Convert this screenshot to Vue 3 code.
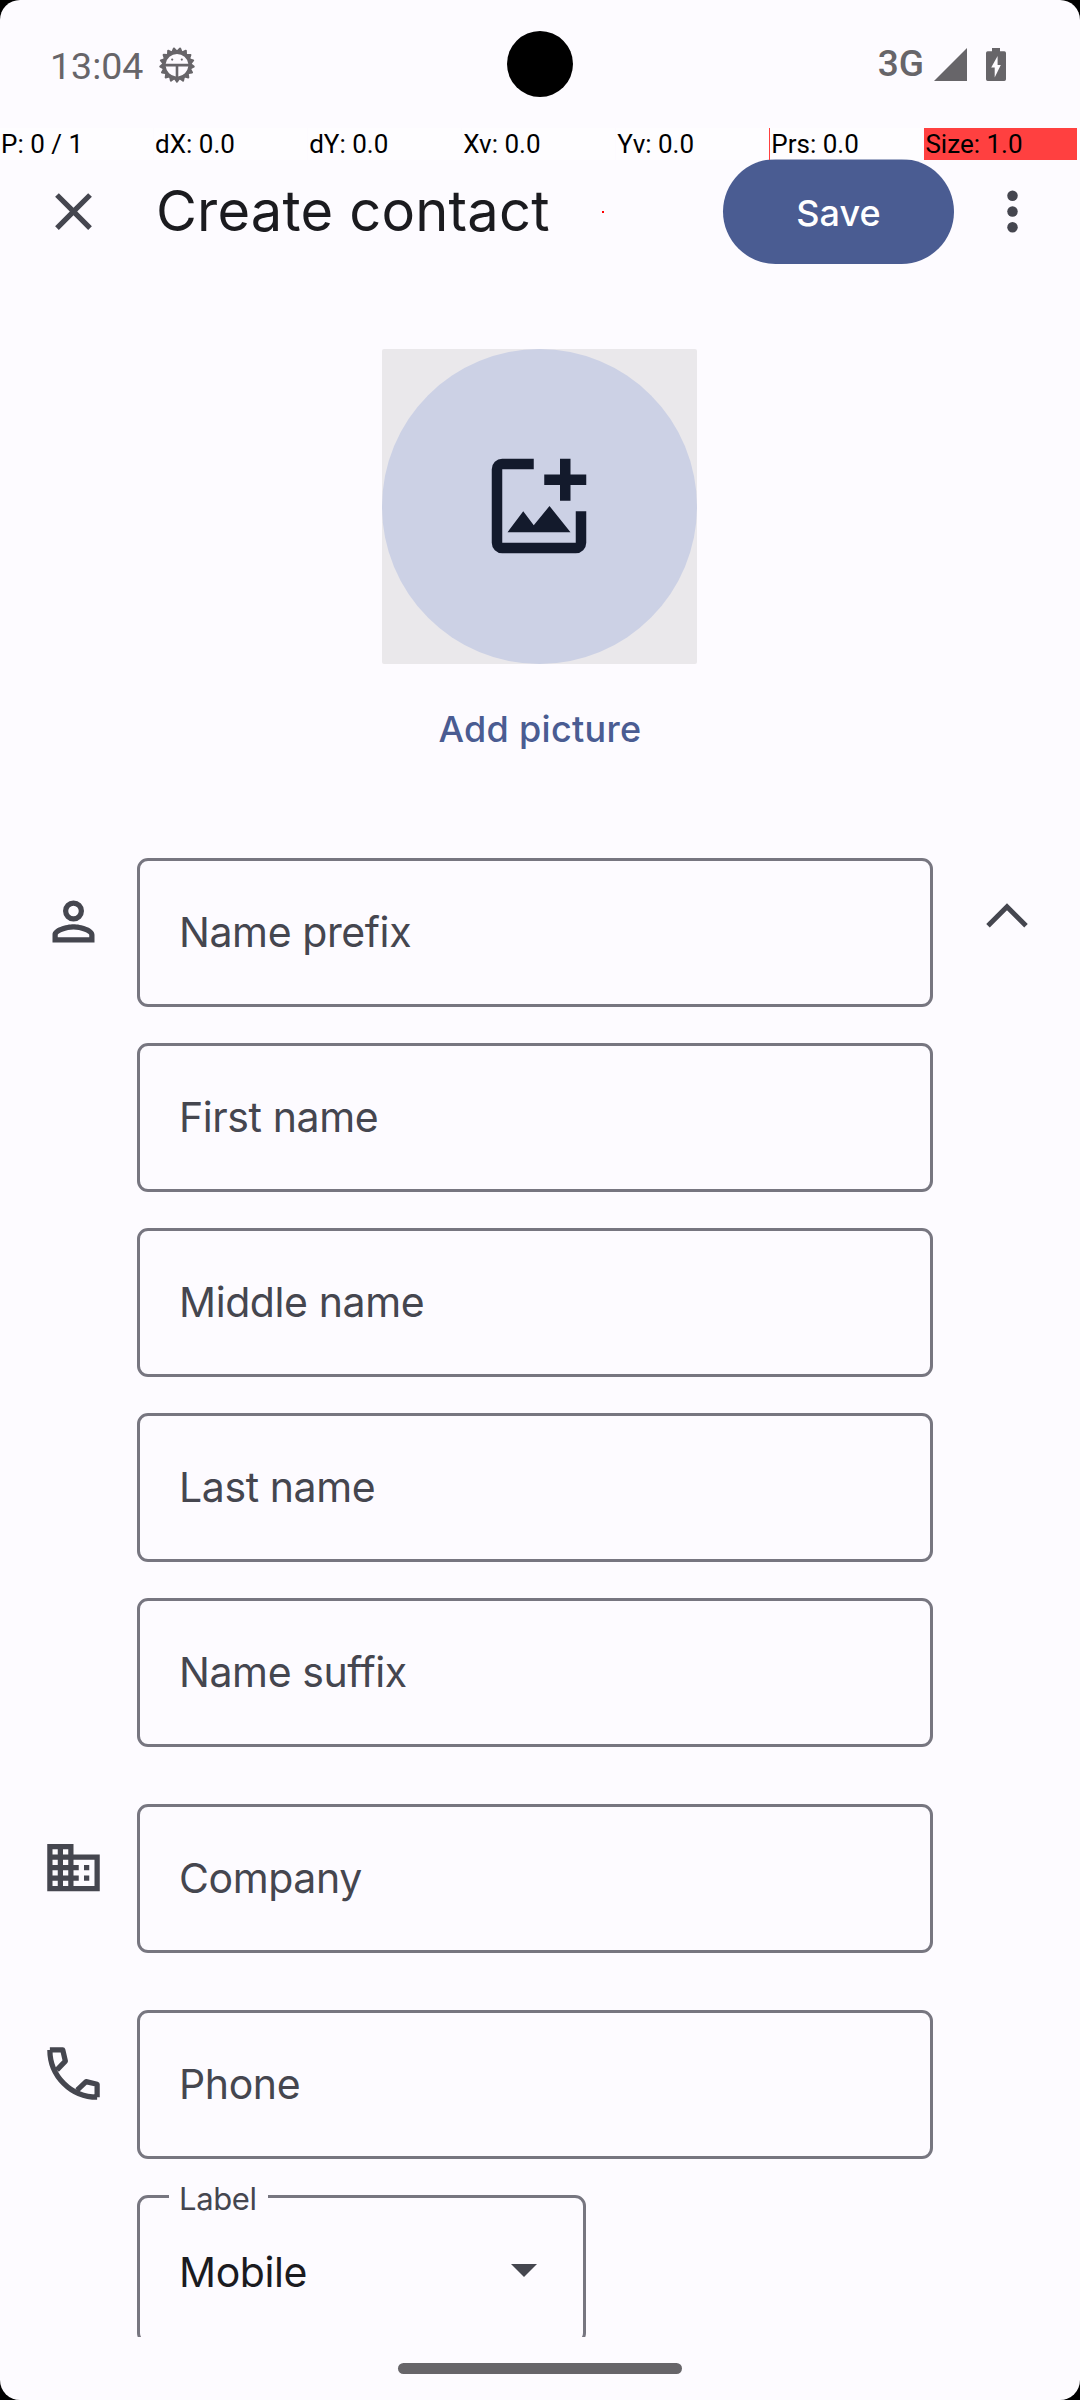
<script setup>
const stats = [
  { text: 'P: 0 / 1' },
  { text: 'dX: 0.0' },
  { text: 'dY: 0.0' },
  { text: 'Xv: 0.0' },
  { text: 'Yv: 0.0' },
  { text: 'Prs: 0.0', kind: 'marked' },
  { text: 'Size: 1.0', kind: 'alert' },
]

const sections = [
  { id: 'name', fields: ['Name prefix', 'First name', 'Middle name', 'Last name', 'Name suffix'] },
  { id: 'company', fields: ['Company'] },
  { id: 'phone', fields: ['Phone'] },
]

const teeth = Array.from({ length: 17 }, (_, i) => (i * 360) / 17 + 10.6)
</script>

<template>
  <div class="screen">
    <header class="status">
      <span class="clock">13:04</span>
      <svg class="bug" viewBox="-19 -19 38 38">
        <path v-for="a in teeth" :key="a" class="tooth" d="M-1.900 -14L0 -16.800L1.900 -14z" :transform="`rotate(${a})`" />
        <path fill-rule="evenodd" d="M-14.8 0a14.8 14.8 0 1 0 29.6 0a14.8 14.8 0 1 0-29.6 0zM-11.3-1.2a11.4 11.4 0 0 1 22.6 0zM-11.3 1.6H-1.3V11.4A11.5 11.5 0 0 1-11.3 1.6zM1.3 1.6H11.3A11.5 11.5 0 0 1 1.3 11.4z" />
        <circle cx="-4.8" cy="-5.4" r="1.1" /><circle cx="4.8" cy="-5.4" r="1.1" />
      </svg>
      <span class="network">3G</span>
      <svg class="signal" viewBox="0 0 33 33"><path d="M33 0V33H0z" /></svg>
      <svg class="battery" viewBox="0 0 20 33">
        <path d="M6 0h8v3.3h4.3q1.7 0 1.7 1.7v26.3q0 1.7-1.7 1.7H1.7Q0 33 0 31.300V5Q0 3.300 1.700 3.300H6z" />
        <path class="bolt" d="M11.6 8L5.200 19.500H8.700V29.500L14.800 17H11.600z" />
      </svg>
      <i class="camera"></i>
    </header>

    <div class="appbar">
      <svg class="icon24" viewBox="0 0 24 24"><path d="M19 6.410L17.590 5 12 10.590 6.410 5 5 6.410 10.590 12 5 17.590 6.410 19 12 13.410 17.590 19 19 17.590 13.410 12z" /></svg>
      <h1>Create contact</h1>
      <button class="save"><span>Save</span></button>
      <svg class="icon24 more" viewBox="0 0 24 24"><circle cx="12" cy="6" r="2" /><circle cx="12" cy="12" r="2" /><circle cx="12" cy="18" r="2" /></svg>
    </div>

    <div class="pointer-bar">
      <span v-for="s in stats" :key="s.text" :class="s.kind">{{ s.text }}</span>
    </div>
    <i class="touch"></i>

    <main>
      <div class="photo">
        <div class="disc">
          <svg viewBox="0 0 24 24">
            <path d="M5 3H11V5H5V19H19V13H21V19a2 2 0 0 1-2 2H5a2 2 0 0 1-2-2V5a2 2 0 0 1 2-2zM16 3h2v3h3v2h-3v3h-2V8h-3V6h3zM6 17l3-4 2 2.670L14 12l4 5z" />
          </svg>
        </div>
      </div>
      <div class="add">Add picture</div>

      <section v-for="s in sections" :key="s.id">
        <svg v-if="s.id === 'name'" class="icon24" viewBox="0 0 24 24">
          <path fill-rule="evenodd" d="M12 4a4 4 0 1 0 0 8 4 4 0 0 0 0-8zm0 2a2 2 0 1 1 0 4 2 2 0 0 1 0-4zM12 13c-2.670 0-8 1.340-8 4v3h16v-3c0-2.660-5.330-4-8-4zm6 5H6v-.990c.200-.720 3.300-2.010 6-2.010s5.800 1.290 6 2z" />
        </svg>
        <svg v-else-if="s.id === 'company'" class="icon24" viewBox="0 0 24 24">
          <path d="M12 7V3H2v18h20V7H12zM6 19H4v-2h2v2zm0-4H4v-2h2v2zm0-4H4V9h2v2zm0-4H4V5h2v2zm4 12H8v-2h2v2zm0-4H8v-2h2v2zm0-4H8V9h2v2zm0-4H8V5h2v2zm10 12h-8v-2h2v-2h-2v-2h2v-2h-2V9h8v10zm-2-8h-2v2h2v-2zm0 4h-2v2h2v-2z" />
        </svg>
        <svg v-else class="icon24 line" viewBox="0 0 24 24">
          <path d="M3 3H7.900L8.900 7.300L5.700 10.600M13.400 18.300L16.800 15.100L21 16.100V21M3 3A18 18 0 0 0 21 21" />
        </svg>
        <div class="fields">
          <div v-for="f in s.fields" :key="f" class="field">{{ f }}</div>
          <div v-if="s.id === 'phone'" class="field select">
            <span class="legend">Label</span>
            <span>Mobile</span>
            <svg viewBox="0 0 26 13"><path d="M0 0H26L13 13z" /></svg>
          </div>
        </div>
        <svg v-if="s.id === 'name'" class="chevron" viewBox="0 0 42 26"><path d="M2 22.700L21 3.700L40 22.700" /></svg>
      </section>
    </main>

    <footer><i></i></footer>
  </div>
</template>

<style>
body { margin: 0; background: #000; }
</style>

<style scoped>
* { box-sizing: border-box; }
.screen {
  position: relative;
  display: flex;
  flex-direction: column;
  width: 1080px;
  height: 2400px;
  overflow: hidden;
  border-radius: 20px;
  background: #fdfbff;
  color: #45464f;
  font-family: Inter, "Open Sans", sans-serif;
}
svg { display: block; flex: none; fill: currentColor; }
.icon24 { width: 63px; height: 63px; }

.status {
  position: relative;
  display: flex;
  align-items: center;
  height: 128px;
  padding: 0 74px 0 50px;
  color: #676569;
}
.clock { width: 108px; font: 37.500px/44px Roboto, sans-serif; padding-top: 4px; }
.bug { width: 38px; height: 38px; margin-top: 1px; }
.tooth { stroke: currentColor; stroke-width: 2; stroke-linejoin: round; }
.network { margin-left: auto; font: 500 37px/44px Roboto, sans-serif; }
.signal { width: 33px; height: 33px; margin-left: 10px; }
.battery { width: 20px; height: 33px; margin-left: 19px; }
.bolt { fill: #fdfbff; }
.camera {
  position: absolute;
  left: 507px;
  top: 31px;
  width: 66px;
  height: 66px;
  border-radius: 50%;
  background: #000;
}

.appbar {
  display: flex;
  align-items: center;
  flex: none;
  height: 167px;
  padding: 0 36px 0 42px;
}
h1 {
  flex: 1;
  margin: 0 0 2px;
  padding-left: 51px;
  color: #1b1b1f;
  font-size: 56px;
  font-weight: 400;
  line-height: 70px;
  letter-spacing: .200px;
  white-space: nowrap;
}
.save {
  width: 231px;
  height: 105px;
  padding: 2px 0 0;
  border: 0;
  border-radius: 53px;
  background: #4a5c92;
  color: #fff;
  font: 500 36px/44px Inter, sans-serif;
}
.more { margin-left: 27px; }

.pointer-bar {
  position: absolute;
  left: 0;
  top: 128px;
  display: grid;
  grid-template-columns: repeat(7, 1fr);
  column-gap: 1.500px;
  width: 1077px;
  height: 32px;
  color: #000;
  font: 26px/32px Roboto, sans-serif;
}
.pointer-bar span { padding-left: 1px; background: rgba(255, 255, 255, .5); }
.pointer-bar .marked { margin-left: -1px; border-left: 1px solid #ff4040; }
.pointer-bar .alert { background: #ff4040; }
.touch { position: absolute; left: 602px; top: 211px; width: 2px; height: 2px; background: #f00; }

main { flex: none; height: 2042px; overflow: hidden; padding-top: 54px; }
.photo { width: 315px; margin: 0 auto 0 382px; border-radius: 2px; background: #eae8eb; }
.disc {
  display: flex;
  align-items: center;
  justify-content: center;
  height: 315px;
  padding: 0 1px 1px 0;
  border-radius: 50%;
  background: #ccd1e5;
  color: #131a2c;
}
.disc svg { width: 126px; height: 126px; }
.add {
  height: 194px;
  padding-top: 43px;
  color: #4a5c92;
  font-size: 36px;
  font-weight: 500;
  line-height: 44px;
  letter-spacing: .300px;
  text-align: center;
}
section { display: flex; align-items: flex-start; padding: 0 52px 0 42px; margin-bottom: 57px; }
section > .icon24 { margin: 32px 32px 0 0; }
.line { fill: none; stroke: currentColor; stroke-width: 2; stroke-linejoin: round; }
.fields { display: flex; flex-direction: column; gap: 36px; width: 796px; }
.field {
  display: flex;
  align-items: center;
  height: 149px;
  padding: 0 39px 1px;
  border: 3px solid #777680;
  border-radius: 11px;
  font-size: 41px;
  line-height: 50px;
  letter-spacing: -.400px;
}
.select {
  position: relative;
  justify-content: space-between;
  width: 449px;
  padding: 5px 46px 0 39px;
  color: #1b1b1f;
}
.select svg { width: 26px; height: 13px; margin-top: -3px; color: #45464f; }
.legend {
  position: absolute;
  left: 29px;
  top: -18px;
  width: 99px;
  padding-left: 10px;
  background: #fdfbff;
  color: #45464f;
  font-size: 31px;
  line-height: 38px;
}
.chevron { width: 42px; height: 26px; margin: 45px 0 0 52.500px; fill: none; stroke: currentColor; stroke-width: 5; }

footer { display: flex; justify-content: center; padding-top: 26px; }
footer i { width: 284px; height: 11px; border-radius: 6px; background: #676569; }
</style>
